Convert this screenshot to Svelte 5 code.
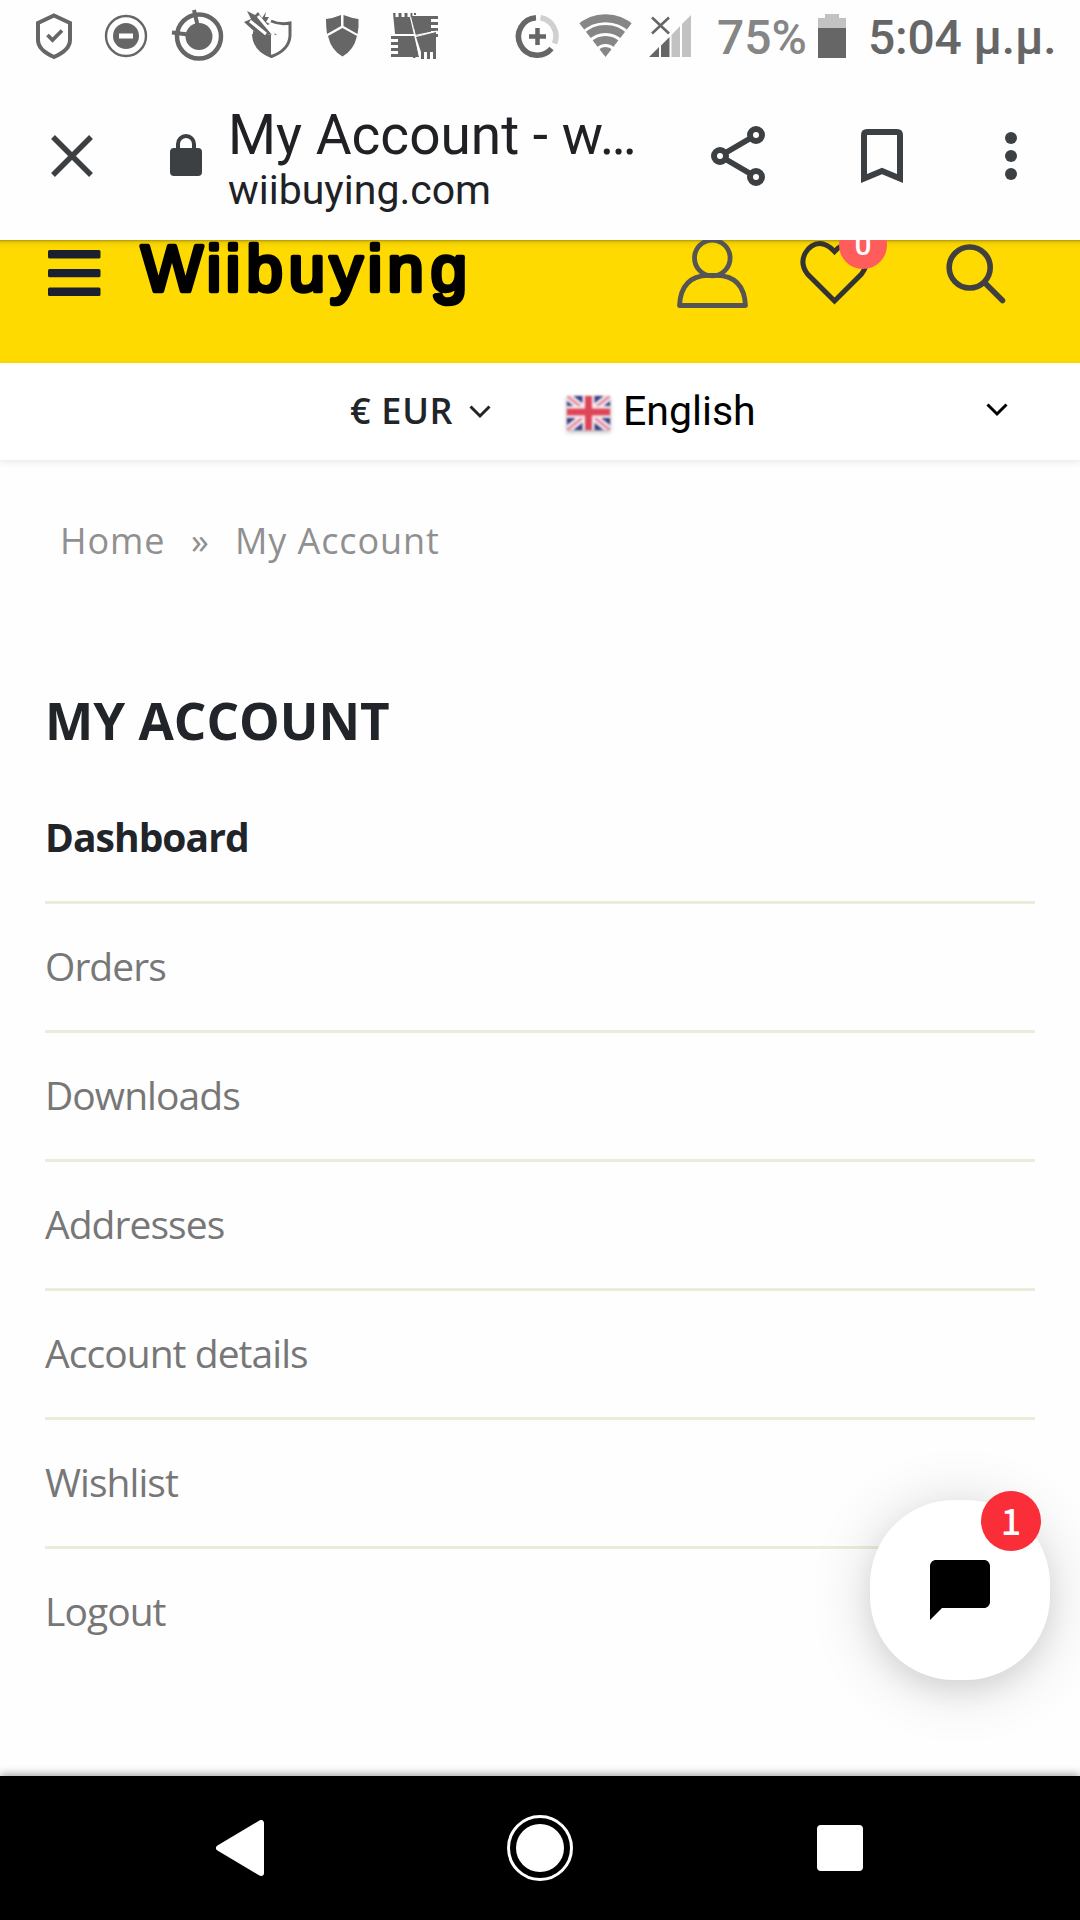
<script>
  const items = ['Dashboard', 'Orders', 'Downloads', 'Addresses', 'Account details', 'Wishlist', 'Logout'];
</script>

<div class="screen">
  <header class="status">
    <svg class="status-icons" width="700" height="72" viewBox="0 0 700 72">
      <g fill="none" stroke="#666">
        <path d="M54 15.500 70 23V40Q70 50 54 57Q38 50 38 40V23Z" stroke-width="4" />
        <path d="M47.500 35 52.500 40 62 30.500" stroke-width="3.800" />
        <circle cx="126" cy="36" r="20" stroke-width="2.400" />
        <circle cx="199" cy="36.500" r="22" stroke-width="4.500" />
        <path d="M172 32.500 188 34.500M194 10 197.500 25" stroke-width="4" />
      </g>
      <circle cx="126" cy="36" r="13" fill="#666" />
      <rect x="119" y="33.500" width="14" height="5" fill="#fff" />
      <circle cx="199" cy="36.500" r="13.500" fill="#666" />
      <g fill="#666">
        <path d="M253 31 271 35V56Q253 48 253 34Z" />
        <path d="M271 21Q280 25 290 23V36Q289 50 271.500 56.500Q254 50 253.500 34" fill="none" stroke="#666" stroke-width="3" />
        <path d="M244 22 251 19 247 11 255 15 258 12 262 18 266 12 265 17 269 17 266 22 270 24 265 26 277 35 257 34Z" />
        <path d="M250 21 266 34M258 16 274 35" stroke="#fff" stroke-width="3" />
        <path d="M326 19Q334 18 341 15V26L327 34Q326 27 326 19Z" />
        <path d="M343.500 15Q351 18 358.500 19Q359 27 357.500 34L343.500 26Z" />
        <path d="M328 36 342.500 28 357 36Q354 50 342.500 56.500Q331 50 328 36Z" />
        <path d="M393 13h2.500v4h3v-4h3v4h3v-4h3v4h3v-4h2v4l2 17h-19.500z" />
        <path d="M411 16h27v3h-7v3h7v3h-7v3h7v3h-7v1l-15 4z" />
        <path d="M391 36h24l4 21h-28v-3h7v-3h-7v-3h7v-3h-7v-3h7v-3h-7z" />
        <path d="M416 37 436 32v27h-3v-7h-3v7h-3v-7h-3v7h-3v-7z" />
        <path d="M413 58h2.500v-2h-2.500zM436 37h2v-3h-2zM414 15h2v-2h-2z" />
      </g>
      <path d="M391 35 415 35.500 437 31M410.500 17 419.500 56" fill="none" stroke="#fff" stroke-width="1.200" />
      <g fill="none" stroke-width="5.600">
        <path d="M536 17.800A18.700 18.700 0 1 0 551.500 48.500" stroke="#666" />
        <path d="M540.500 17.800A18.700 18.700 0 0 1 554.500 43.500" stroke="#d0d0d0" />
        <path d="M529 36.500h17M537.500 28v17" stroke="#666" stroke-width="4.500" />
      </g>
      <clipPath id="fan"><path d="M605.500 57 576 19V8H635V19Z" /></clipPath>
      <g clip-path="url(#fan)" fill="none" stroke="#868686">
        <circle cx="605.500" cy="57" r="38.800" stroke-width="8" />
        <circle cx="605.500" cy="57" r="28" stroke-width="8" />
        <circle cx="605.500" cy="57" r="17" stroke-width="8" />
        <circle cx="605.500" cy="57" r="5" stroke-width="10" />
      </g>
      <path d="M649 57 659 47V57Z M661 57V45.500L669.500 37V57Z" fill="#666" />
      <path d="M671.500 57V35L680 26V57ZM682 57V24L691 15V57Z" fill="#c2c2c2" />
      <path d="M652 17.500 669 33.500M669 17.500 652 33.500" stroke="#666" stroke-width="2.600" />
    </svg>
    <span class="percent">75%</span>
    <svg class="battery" width="28" height="44" viewBox="0 0 28 44">
      <path d="M0 4H7V0H21V4H28V15H0Z" fill="#c2c2c2" /><path d="M0 14H28V44H0Z" fill="#666" />
    </svg>
    <span class="clock">5:04 μ.μ.</span>
  </header>

  <div class="toolbar">
    <svg class="close" width="42" height="42" viewBox="0 0 42 42"><path d="M2 2 40 40M40 2 2 40" stroke="#3c4043" stroke-width="5.400" /></svg>
    <svg class="lock" width="32" height="42" viewBox="0 0 32 42">
      <rect y="14" width="32" height="28" rx="4" fill="#3c4043" />
      <path d="M8 15V10a8 8 0 0 1 16 0V15" fill="none" stroke="#3c4043" stroke-width="4" />
    </svg>
    <div class="page-info">
      <div class="page-title">My Account - w…</div>
      <div class="page-url">wiibuying.com</div>
    </div>
    <svg class="share" width="54" height="60" viewBox="0 0 54 60">
      <path d="M45 9 9 30 45 51" fill="none" stroke="#3c4043" stroke-width="5.500" />
      <g fill="#fff" stroke="#3c4043" stroke-width="6"><circle cx="45" cy="9" r="6" /><circle cx="9" cy="30" r="6" /><circle cx="45" cy="51" r="6" /></g>
    </svg>
    <svg class="bookmark" width="42" height="54" viewBox="0 0 42 54">
      <path d="M3 49.500V6Q3 3 6 3H36Q39 3 39 6V49.500L21 42Z" fill="none" stroke="#3c4043" stroke-width="6" />
    </svg>
    <svg class="dots" width="12" height="48" viewBox="0 0 12 48" fill="#3c4043">
      <circle cx="6" cy="6" r="6" /><circle cx="6" cy="24" r="6" /><circle cx="6" cy="42" r="6" />
    </svg>
  </div>

  <div class="brand">
    <svg class="menu" width="53" height="123" viewBox="0 0 53 123" fill="#1a2030">
      <rect y="10" width="52.500" height="8.500" rx="1.500" /><rect y="29" width="52.500" height="8.300" rx="1.500" /><rect y="47.500" width="52.500" height="8.500" rx="1.500" />
    </svg>
    <svg class="logo" width="340" height="123" viewBox="0 0 340 123">
      <text x="1.300 66.800 85.800 106.600 148.700 189.900 227.800 247.500 290.700" y="50.500">Wiibuying</text>
    </svg>
    <svg class="actions" width="340" height="123" viewBox="0 0 340 123" fill="none">
      <g stroke="#555" stroke-width="4.800">
        <circle cx="42.300" cy="18" r="17.800" />
        <path d="M9.500 65.500H75.500Q74 36 47 35.300H38Q11 36 9.500 65.500Z" stroke-linejoin="round" />
      </g>
      <path d="M164.500 61 137.500 34C126 19 139 3.500 149.500 3.500Q157 3.500 164.500 11.500Q172 3.500 179.500 3.500C190 3.500 203 19 191.500 34Z" stroke="#333" stroke-width="5" />
      <circle cx="193" cy="5" r="24" fill="#ff5c5c" />
      <text class="wish-count" x="193" y="15" text-anchor="middle">0</text>
      <g stroke="#404040" stroke-width="5.600" stroke-linecap="round"><circle cx="299.700" cy="27.500" r="20.500" /><path d="M315 43 332.500 60.500" /></g>
    </svg>
  </div>

  <div class="locale">
    <span class="currency">€ EUR</span>
    <svg class="chev-a" width="22" height="14" viewBox="0 0 22 14"><path d="M1.500 1.500 11 11 20.500 1.500" /></svg>
    <svg class="flag" width="43" height="34" viewBox="0 0 43 34">
      <rect width="43" height="34" fill="#343c80" />
      <path d="M0 0 43 34M43 0 0 34" stroke="#f5eaf2" stroke-width="8" /><path d="M0 0 43 34M43 0 0 34" stroke="#e58294" stroke-width="2.500" />
      <path d="M21.500 0V34M0 16H43" stroke="#fbeef1" stroke-width="12" /><path d="M21.500 0V34M0 16H43" stroke="#dd4659" stroke-width="7" />
    </svg>
    <span class="language">English</span>
    <svg class="chev-b" width="22" height="14" viewBox="0 0 22 14"><path d="M1.500 1.500 11 11 20.500 1.500" /></svg>
  </div>

  <nav class="crumbs"><span class="home">Home</span><span class="sep">»</span><span>My Account</span></nav>
  <h1>MY ACCOUNT</h1>
  <ul>
    {#each items as item, i}
      <li class:active={i === 0}><span class="label">{item}</span></li>
    {/each}
  </ul>

  <div class="chat">
    <svg width="60" height="60" viewBox="2 2 20 20"><path d="M20 2H4c-1.100 0-2 .9-2 2v18l4-4h14c1.100 0 2-.9 2-2V4c0-1.100-.9-2-2-2z" /></svg>
    <span class="count">1</span>
  </div>

  <footer>
    <svg class="back" width="48" height="56" viewBox="0 0 48 56"><path d="M3 28 45 3V53Z" fill="#fff" stroke="#fff" stroke-width="6" stroke-linejoin="round" /></svg>
    <svg class="home-btn" width="66" height="66" viewBox="0 0 66 66"><circle cx="33" cy="33" r="31.500" fill="none" stroke="#fff" stroke-width="3" /><circle cx="33" cy="33" r="24" fill="#fff" /></svg>
    <svg class="recent" width="46" height="46" viewBox="0 0 46 46"><rect width="46" height="46" rx="4" fill="#fff" /></svg>
  </footer>
</div>

<style>
  :global(body) { background: #fefefe; }
  svg { display: block; flex: none; }
  span { white-space: nowrap; }
  .screen { position: relative; width: 1080px; height: 1920px; overflow: hidden; display: flex; flex-direction: column; background: #fefefe; font-family: "Open Sans", "Noto Sans", sans-serif; }
  .status { display: flex; height: 72px; color: #666; font: 500 48px/75px Roboto, sans-serif; }
  .percent { width: 101px; margin-left: 17px; color: #868686; }
  .battery { margin-top: 14px; }
  .clock { margin-left: 22px; letter-spacing: -.2px; }
  .toolbar { display: flex; align-items: center; height: 168px; box-sizing: border-box; padding-left: 51px; font-family: Roboto, sans-serif; color: #202124; }
  .lock { margin: -2px 0 0 77px; }
  .page-info { width: 420px; margin-left: 26px; padding-top: 5px; }
  .page-title { font-size: 55px; line-height: 64px; white-space: nowrap; }
  .page-url { font-size: 41px; line-height: 47px; }
  .share { margin-left: 63px; }
  .bookmark { margin-left: 96px; }
  .dots { margin-left: 102px; }
  .brand { display: flex; height: 123px; box-sizing: border-box; padding-left: 48px; background: linear-gradient(#b39a08, #e6c500 2px, #f5d200 4px, #ffda00 9px); }
  .logo { margin-left: 39px; overflow: visible; }
  .logo text { font: 400 65px "Liberation Sans", sans-serif; fill: #000; stroke: #000; stroke-width: 4.6px; stroke-linejoin: round; }
  .actions { margin-left: 190px; }
  .wish-count { font: 500 30px Roboto, sans-serif; fill: #fff; }
  .locale { display: flex; height: 97px; box-sizing: border-box; padding-left: 350px; background: #fff; box-shadow: 0 2px 7px rgba(0, 0, 0, .09); line-height: 97px; }
  .currency { width: 119px; font-size: 36px; font-weight: 600; line-height: 95px; letter-spacing: .7px; color: #212529; }
  .chev-a, .chev-b { fill: none; stroke: #212529; stroke-width: 3; }
  .chev-a { margin-top: 42px; }
  .flag { margin: 33px 13px 0 76px; filter: blur(.8px) drop-shadow(0 2px 2px rgba(0, 0, 0, .3)); }
  .language { width: 363px; color: #000; font: 41px/97px Roboto, sans-serif; }
  .chev-b { margin-top: 40px; stroke: #000; }
  .crumbs { display: flex; margin-top: 56px; padding-left: 60px; height: 50px; color: #909090; font-size: 36px; line-height: 50px; letter-spacing: .9px; }
  .home { width: 131px; }
  .sep { width: 44px; }
  h1 { margin: 119px 0 0 45px; height: 70px; color: #212529; font-size: 51.2px; font-weight: 700; line-height: 70px; }
  ul { width: 990px; margin: 20px 0 0 45px; padding: 0; list-style: none; }
  li { height: 126px; border-bottom: 3px solid #ebeddc; color: #777; font-size: 39px; line-height: 124px; letter-spacing: -.95px; }
  li:last-child { border: 0; }
  .active { color: #212529; font-weight: 700; }
  .chat { position: absolute; left: 870px; top: 1500px; width: 180px; height: 180px; display: grid; place-items: center; border-radius: 84px; background: #fff; box-shadow: 0 6px 60px rgba(0, 0, 0, .17), 0 12px 30px -4px rgba(0, 0, 0, .08); }
  .count { position: absolute; left: 111px; top: -9px; width: 60px; height: 60px; border-radius: 50%; background: #fa2e38; color: #fff; font: 500 36px/57px "Noto Sans CJK SC", sans-serif; text-align: center; }
  footer { display: flex; align-items: center; height: 144px; box-sizing: border-box; margin-top: auto; padding-left: 216px; background: #000; box-shadow: 0 -2px 8px rgba(0, 0, 0, .35); }
  .home-btn { margin-left: 243px; }
  .recent { margin-left: 244px; }
</style>
